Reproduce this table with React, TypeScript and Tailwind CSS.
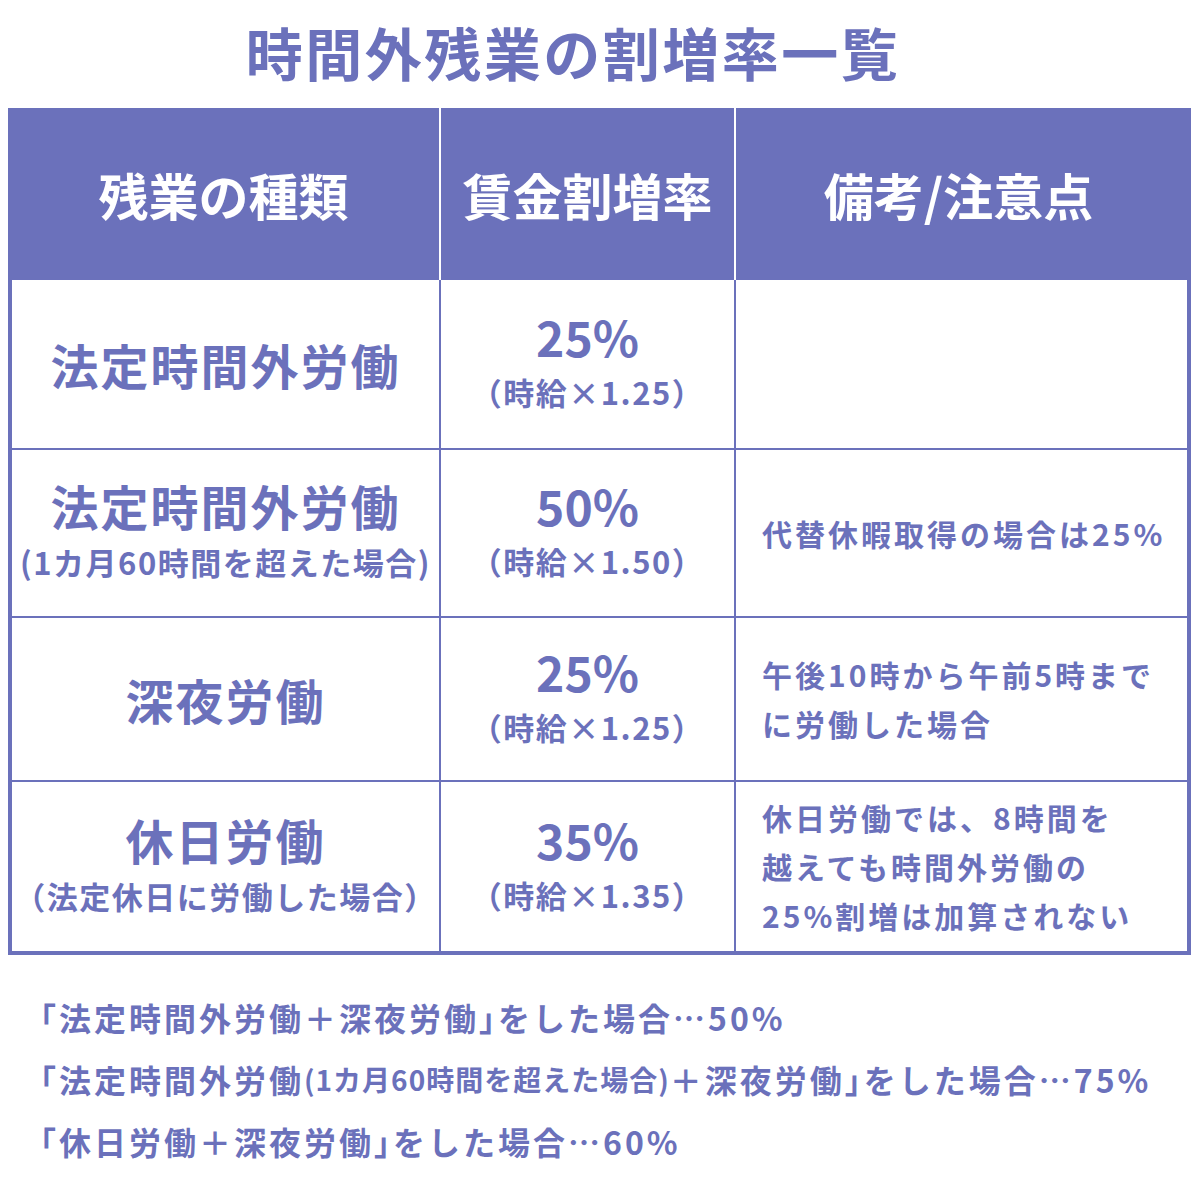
import React from "react";

function TitleCell({ main, sub }: { main: string; sub?: string }) {
  return (
    <div className="bg-white flex flex-col items-center justify-center">
      <div className="text-[48px] tracking-[2px] leading-[57px]">{main}</div>
      {sub && <div className="text-[31px] tracking-[1.5px] leading-[55px]">{sub}</div>}
    </div>
  );
}

function RateCell({ pct, mult }: { pct: string; mult: string }) {
  return (
    <div className="bg-white flex flex-col items-center justify-center">
      <div className="text-[48px] leading-[55px]">{pct}</div>
      <div className="text-[31px] tracking-[1.5px] leading-[55px]">（時給×{mult}）</div>
    </div>
  );
}

function NoteCell({ lines }: { lines: string[] }) {
  return (
    <div className="bg-white flex flex-col justify-center pl-[26px] text-[30px] tracking-[3px] leading-[49px]">
      {lines.map((l, i) => (
        <div key={i}>{l}</div>
      ))}
    </div>
  );
}

export default function App() {
  return (
    <div className="w-[1200px] h-[1193px] bg-white font-['Noto_Sans_CJK_JP',sans-serif] text-[#6b71bb] font-bold overflow-hidden">
      <div className="h-[108px] flex items-center justify-center pr-[54px] pb-[6px] text-[57px] tracking-[2.5px] leading-none">
        時間外残業の割増率一覧
      </div>
      <div className="ml-[8px] w-[1183px]">
        <div className="flex h-[172px] bg-[#6b71bb] text-white text-[50px] leading-none">
          <div className="w-[431px] flex items-center justify-center">残業の種類</div>
          <div className="w-[2px] bg-white" />
          <div className="w-[293px] flex items-center justify-center">賃金割増率</div>
          <div className="w-[2px] bg-white" />
          <div className="flex-1 flex items-center justify-center pr-[10px]">備考/注意点</div>
        </div>
        <div className="grid grid-cols-[427px_293px_451px] grid-rows-[168px_166px_162px_169px] gap-[2px] bg-[#6b71bb] border-x-4 border-b-4 border-[#6b71bb]">
          <TitleCell main="法定時間外労働" />
          <RateCell pct="25%" mult="1.25" />
          <div className="bg-white" />

          <TitleCell main="法定時間外労働" sub="(1カ月60時間を超えた場合)" />
          <RateCell pct="50%" mult="1.50" />
          <NoteCell lines={["代替休暇取得の場合は25%"]} />

          <TitleCell main="深夜労働" />
          <RateCell pct="25%" mult="1.25" />
          <NoteCell lines={["午後10時から午前5時まで", "に労働した場合"]} />

          <TitleCell main="休日労働" sub="（法定休日に労働した場合）" />
          <RateCell pct="35%" mult="1.35" />
          <NoteCell lines={["休日労働では、8時間を", "越えても時間外労働の", "25%割増は加算されない"]} />
        </div>
      </div>
      <div className="mt-[31px] flex flex-col text-[32px] tracking-[3px] leading-none">
        <div className="h-[62px] flex items-center pl-[40px]">｢法定時間外労働＋深夜労働｣をした場合…50%</div>
        <div className="h-[62px] flex items-center pl-[40px]">
          ｢法定時間外労働<span className="text-[28px] tracking-[1px]">(1カ月60時間を超えた場合)</span>＋深夜労働｣をした場合…75%
        </div>
        <div className="h-[62px] flex items-center pl-[40px]">｢休日労働＋深夜労働｣をした場合…60%</div>
      </div>
    </div>
  );
}
